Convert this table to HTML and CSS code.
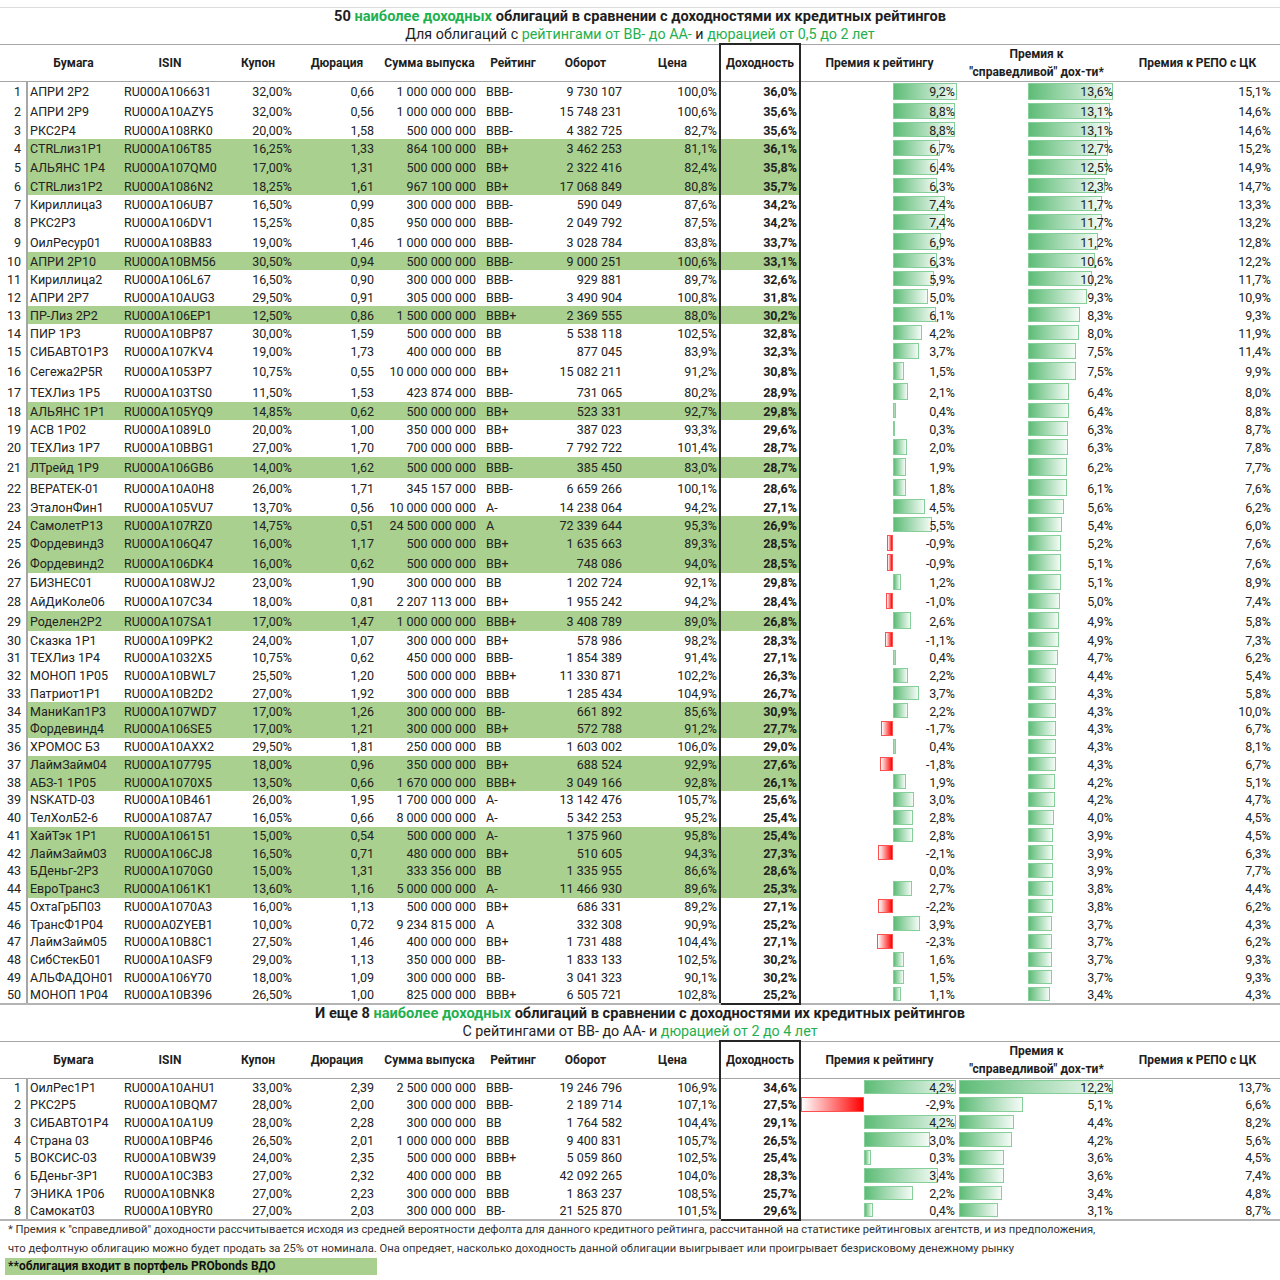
FILE: index.html
```html
<!DOCTYPE html>
<html lang="ru">
<head>
<meta charset="utf-8">
<title>50 наиболее доходных облигаций</title>
<link rel="stylesheet" href="styles.css">
</head>
<body>
<div class="sheet">
<header class="cap first">
<div class="h1">50 <span class="gr">наиболее доходных</span> облигаций в сравнении с доходностями их кредитных рейтингов</div>
<div class="h2">Для облигаций с <span class="gr">рейтингами от BB- до AA-</span> и <span class="gr">дюрацией от 0,5 до 2 лет</span></div>
</header>
<table class="grid t1">
<colgroup><col class="c1"><col class="c2"><col class="c3"><col class="c4"><col class="c5"><col class="c6"><col class="c7"><col class="c8"><col class="c9"><col class="c10"><col class="c11"><col class="c12"><col class="c13"></colgroup>
<thead><tr><th></th><th>Бумага</th><th>ISIN</th><th>Купон</th><th>Дюрация</th><th>Сумма выпуска</th><th>Рейтинг</th><th>Оборот</th><th>Цена</th><th>Доходность</th><th>Премия к рейтингу</th><th>Премия к<br>"справедливой" дох-ти*</th><th>Премия к РЕПО с ЦК</th></tr></thead>
<tbody>
<tr class="a"><td>1</td><td>АПРИ 2Р2</td><td>RU000A106631</td><td>32,00%</td><td>0,66</td><td>1 000 000 000</td><td>BBB-</td><td>9 730 107</td><td>100,0%</td><td>36,0%</td><td><i class="bar" style="width:64px"></i><span class="v">9,2%</span></td><td><i class="bar" style="width:85px"></i><span class="v">13,6%</span></td><td>15,1%</td></tr>
<tr class="c"><td>2</td><td>АПРИ 2Р9</td><td>RU000A10AZY5</td><td>32,00%</td><td>0,56</td><td>1 000 000 000</td><td>BBB-</td><td>15 748 231</td><td>100,6%</td><td>35,6%</td><td><i class="bar" style="width:62px"></i><span class="v">8,8%</span></td><td><i class="bar" style="width:82px"></i><span class="v">13,1%</span></td><td>14,6%</td></tr>
<tr><td>3</td><td>РКС2Р4</td><td>RU000A108RK0</td><td>20,00%</td><td>1,58</td><td>500 000 000</td><td>BBB-</td><td>4 382 725</td><td>82,7%</td><td>35,6%</td><td><i class="bar" style="width:62px"></i><span class="v">8,8%</span></td><td><i class="bar" style="width:82px"></i><span class="v">13,1%</span></td><td>14,6%</td></tr>
<tr class="c g"><td>4</td><td>CTRLлиз1Р1</td><td>RU000A106T85</td><td>16,25%</td><td>1,33</td><td>864 100 000</td><td>BB+</td><td>3 462 253</td><td>81,1%</td><td>36,1%</td><td><i class="bar" style="width:47px"></i><span class="v">6,7%</span></td><td><i class="bar" style="width:80px"></i><span class="v">12,7%</span></td><td>15,2%</td></tr>
<tr class="c g"><td>5</td><td>АЛЬЯНС 1Р4</td><td>RU000A107QM0</td><td>17,00%</td><td>1,31</td><td>500 000 000</td><td>BB+</td><td>2 322 416</td><td>82,4%</td><td>35,8%</td><td><i class="bar" style="width:45px"></i><span class="v">6,4%</span></td><td><i class="bar" style="width:79px"></i><span class="v">12,5%</span></td><td>14,9%</td></tr>
<tr class="g"><td>6</td><td>CTRLлиз1Р2</td><td>RU000A1086N2</td><td>18,25%</td><td>1,61</td><td>967 100 000</td><td>BB+</td><td>17 068 849</td><td>80,8%</td><td>35,7%</td><td><i class="bar" style="width:44px"></i><span class="v">6,3%</span></td><td><i class="bar" style="width:77px"></i><span class="v">12,3%</span></td><td>14,7%</td></tr>
<tr><td>7</td><td>Кириллица3</td><td>RU000A106UB7</td><td>16,50%</td><td>0,99</td><td>300 000 000</td><td>BBB-</td><td>590 049</td><td>87,6%</td><td>34,2%</td><td><i class="bar" style="width:52px"></i><span class="v">7,4%</span></td><td><i class="bar" style="width:74px"></i><span class="v">11,7%</span></td><td>13,3%</td></tr>
<tr class="c"><td>8</td><td>РКС2Р3</td><td>RU000A106DV1</td><td>15,25%</td><td>0,85</td><td>950 000 000</td><td>BBB-</td><td>2 049 792</td><td>87,5%</td><td>34,2%</td><td><i class="bar" style="width:52px"></i><span class="v">7,4%</span></td><td><i class="bar" style="width:74px"></i><span class="v">11,7%</span></td><td>13,2%</td></tr>
<tr class="b"><td>9</td><td>ОилРесур01</td><td>RU000A108B83</td><td>19,00%</td><td>1,46</td><td>1 000 000 000</td><td>BBB-</td><td>3 028 784</td><td>83,8%</td><td>33,7%</td><td><i class="bar" style="width:48px"></i><span class="v">6,9%</span></td><td><i class="bar" style="width:70px"></i><span class="v">11,2%</span></td><td>12,8%</td></tr>
<tr class="g"><td>10</td><td>АПРИ 2Р10</td><td>RU000A10BM56</td><td>30,50%</td><td>0,94</td><td>500 000 000</td><td>BBB-</td><td>9 000 251</td><td>100,6%</td><td>33,1%</td><td><i class="bar" style="width:44px"></i><span class="v">6,3%</span></td><td><i class="bar" style="width:67px"></i><span class="v">10,6%</span></td><td>12,2%</td></tr>
<tr><td>11</td><td>Кириллица2</td><td>RU000A106L67</td><td>16,50%</td><td>0,90</td><td>300 000 000</td><td>BBB-</td><td>929 881</td><td>89,7%</td><td>32,6%</td><td><i class="bar" style="width:41px"></i><span class="v">5,9%</span></td><td><i class="bar" style="width:64px"></i><span class="v">10,2%</span></td><td>11,7%</td></tr>
<tr><td>12</td><td>АПРИ 2Р7</td><td>RU000A10AUG3</td><td>29,50%</td><td>0,91</td><td>305 000 000</td><td>BBB-</td><td>3 490 904</td><td>100,8%</td><td>31,8%</td><td><i class="bar" style="width:35px"></i><span class="v">5,0%</span></td><td><i class="bar" style="width:59px"></i><span class="v">9,3%</span></td><td>10,9%</td></tr>
<tr class="g"><td>13</td><td>ПР-Лиз 2Р2</td><td>RU000A106EP1</td><td>12,50%</td><td>0,86</td><td>1 500 000 000</td><td>BBB+</td><td>2 369 555</td><td>88,0%</td><td>30,2%</td><td><i class="bar" style="width:43px"></i><span class="v">6,1%</span></td><td><i class="bar" style="width:52px"></i><span class="v">8,3%</span></td><td>9,3%</td></tr>
<tr><td>14</td><td>ПИР 1Р3</td><td>RU000A10BP87</td><td>30,00%</td><td>1,59</td><td>500 000 000</td><td>BB</td><td>5 538 118</td><td>102,5%</td><td>32,8%</td><td><i class="bar" style="width:29px"></i><span class="v">4,2%</span></td><td><i class="bar" style="width:51px"></i><span class="v">8,0%</span></td><td>11,9%</td></tr>
<tr class="c"><td>15</td><td>СИБАВТО1Р3</td><td>RU000A107KV4</td><td>19,00%</td><td>1,73</td><td>400 000 000</td><td>BB</td><td>877 045</td><td>83,9%</td><td>32,3%</td><td><i class="bar" style="width:26px"></i><span class="v">3,7%</span></td><td><i class="bar" style="width:48px"></i><span class="v">7,5%</span></td><td>11,4%</td></tr>
<tr class="a"><td>16</td><td>Сегежа2Р5R</td><td>RU000A1053P7</td><td>10,75%</td><td>0,55</td><td>10 000 000 000</td><td>BB+</td><td>15 082 211</td><td>91,2%</td><td>30,8%</td><td><i class="bar" style="width:11px"></i><span class="v">1,5%</span></td><td><i class="bar" style="width:48px"></i><span class="v">7,5%</span></td><td>9,9%</td></tr>
<tr class="b"><td>17</td><td>ТЕХЛиз 1Р5</td><td>RU000A103TS0</td><td>11,50%</td><td>1,53</td><td>423 874 000</td><td>BBB-</td><td>731 065</td><td>80,2%</td><td>28,9%</td><td><i class="bar" style="width:15px"></i><span class="v">2,1%</span></td><td><i class="bar" style="width:41px"></i><span class="v">6,4%</span></td><td>8,0%</td></tr>
<tr class="g"><td>18</td><td>АЛЬЯНС 1Р1</td><td>RU000A105YQ9</td><td>14,85%</td><td>0,62</td><td>500 000 000</td><td>BB+</td><td>523 331</td><td>92,7%</td><td>29,8%</td><td><i class="bar" style="width:3px"></i><span class="v">0,4%</span></td><td><i class="bar" style="width:41px"></i><span class="v">6,4%</span></td><td>8,8%</td></tr>
<tr><td>19</td><td>АСВ 1Р02</td><td>RU000A1089L0</td><td>20,00%</td><td>1,00</td><td>350 000 000</td><td>BB+</td><td>387 023</td><td>93,3%</td><td>29,6%</td><td><i class="bar" style="width:2px"></i><span class="v">0,3%</span></td><td><i class="bar" style="width:40px"></i><span class="v">6,3%</span></td><td>8,7%</td></tr>
<tr class="c"><td>20</td><td>ТЕХЛиз 1Р7</td><td>RU000A10BBG1</td><td>27,00%</td><td>1,70</td><td>700 000 000</td><td>BBB-</td><td>7 792 722</td><td>101,4%</td><td>28,7%</td><td><i class="bar" style="width:14px"></i><span class="v">2,0%</span></td><td><i class="bar" style="width:40px"></i><span class="v">6,3%</span></td><td>7,8%</td></tr>
<tr class="a g"><td>21</td><td>ЛТрейд 1Р9</td><td>RU000A106GB6</td><td>14,00%</td><td>1,62</td><td>500 000 000</td><td>BBB-</td><td>385 450</td><td>83,0%</td><td>28,7%</td><td><i class="bar" style="width:13px"></i><span class="v">1,9%</span></td><td><i class="bar" style="width:39px"></i><span class="v">6,2%</span></td><td>7,7%</td></tr>
<tr class="b"><td>22</td><td>ВЕРАТЕК-01</td><td>RU000A10A0H8</td><td>26,00%</td><td>1,71</td><td>345 157 000</td><td>BBB-</td><td>6 659 266</td><td>100,1%</td><td>28,6%</td><td><i class="bar" style="width:13px"></i><span class="v">1,8%</span></td><td><i class="bar" style="width:39px"></i><span class="v">6,1%</span></td><td>7,6%</td></tr>
<tr><td>23</td><td>ЭталонФин1</td><td>RU000A105VU7</td><td>13,70%</td><td>0,56</td><td>10 000 000 000</td><td>A-</td><td>14 238 064</td><td>94,2%</td><td>27,1%</td><td><i class="bar" style="width:32px"></i><span class="v">4,5%</span></td><td><i class="bar" style="width:36px"></i><span class="v">5,6%</span></td><td>6,2%</td></tr>
<tr class="g"><td>24</td><td>СамолетР13</td><td>RU000A107RZ0</td><td>14,75%</td><td>0,51</td><td>24 500 000 000</td><td>A</td><td>72 339 644</td><td>95,3%</td><td>26,9%</td><td><i class="bar" style="width:39px"></i><span class="v">5,5%</span></td><td><i class="bar" style="width:34px"></i><span class="v">5,4%</span></td><td>6,0%</td></tr>
<tr class="c g"><td>25</td><td>Фордевинд3</td><td>RU000A106Q47</td><td>16,00%</td><td>1,17</td><td>500 000 000</td><td>BB+</td><td>1 635 663</td><td>89,3%</td><td>28,5%</td><td><i class="bar neg" style="width:6px"></i><span class="v">-0,9%</span></td><td><i class="bar" style="width:33px"></i><span class="v">5,2%</span></td><td>7,6%</td></tr>
<tr class="b g"><td>26</td><td>Фордевинд2</td><td>RU000A106DK4</td><td>16,00%</td><td>0,62</td><td>500 000 000</td><td>BB+</td><td>748 086</td><td>94,0%</td><td>28,5%</td><td><i class="bar neg" style="width:6px"></i><span class="v">-0,9%</span></td><td><i class="bar" style="width:33px"></i><span class="v">5,1%</span></td><td>7,6%</td></tr>
<tr class="c"><td>27</td><td>БИЗНЕС01</td><td>RU000A108WJ2</td><td>23,00%</td><td>1,90</td><td>300 000 000</td><td>BB</td><td>1 202 724</td><td>92,1%</td><td>29,8%</td><td><i class="bar" style="width:8px"></i><span class="v">1,2%</span></td><td><i class="bar" style="width:33px"></i><span class="v">5,1%</span></td><td>8,9%</td></tr>
<tr class="c"><td>28</td><td>АйДиКоле06</td><td>RU000A107C34</td><td>18,00%</td><td>0,81</td><td>2 207 113 000</td><td>BB+</td><td>1 955 242</td><td>94,2%</td><td>28,4%</td><td><i class="bar neg" style="width:7px"></i><span class="v">-1,0%</span></td><td><i class="bar" style="width:32px"></i><span class="v">5,0%</span></td><td>7,4%</td></tr>
<tr class="b g"><td>29</td><td>Роделен2Р2</td><td>RU000A107SA1</td><td>17,00%</td><td>1,47</td><td>1 000 000 000</td><td>BBB+</td><td>3 408 789</td><td>89,0%</td><td>26,8%</td><td><i class="bar" style="width:18px"></i><span class="v">2,6%</span></td><td><i class="bar" style="width:31px"></i><span class="v">4,9%</span></td><td>5,8%</td></tr>
<tr><td>30</td><td>Сказка 1Р1</td><td>RU000A109PK2</td><td>24,00%</td><td>1,07</td><td>300 000 000</td><td>BB+</td><td>578 986</td><td>98,2%</td><td>28,3%</td><td><i class="bar neg" style="width:8px"></i><span class="v">-1,1%</span></td><td><i class="bar" style="width:31px"></i><span class="v">4,9%</span></td><td>7,3%</td></tr>
</tbody>
<tbody class="s">
<tr><td>31</td><td>ТЕХЛиз 1Р4</td><td>RU000A1032X5</td><td>10,75%</td><td>0,62</td><td>450 000 000</td><td>BBB-</td><td>1 854 389</td><td>91,4%</td><td>27,1%</td><td><i class="bar" style="width:3px"></i><span class="v">0,4%</span></td><td><i class="bar" style="width:30px"></i><span class="v">4,7%</span></td><td>6,2%</td></tr>
<tr><td>32</td><td>МОНОП 1Р05</td><td>RU000A10BWL7</td><td>25,50%</td><td>1,20</td><td>500 000 000</td><td>BBB+</td><td>11 330 871</td><td>102,2%</td><td>26,3%</td><td><i class="bar" style="width:15px"></i><span class="v">2,2%</span></td><td><i class="bar" style="width:28px"></i><span class="v">4,4%</span></td><td>5,4%</td></tr>
<tr><td>33</td><td>Патриот1Р1</td><td>RU000A10B2D2</td><td>27,00%</td><td>1,92</td><td>300 000 000</td><td>BBB</td><td>1 285 434</td><td>104,9%</td><td>26,7%</td><td><i class="bar" style="width:26px"></i><span class="v">3,7%</span></td><td><i class="bar" style="width:28px"></i><span class="v">4,3%</span></td><td>5,8%</td></tr>
<tr class="g"><td>34</td><td>МаниКап1Р3</td><td>RU000A107WD7</td><td>17,00%</td><td>1,26</td><td>300 000 000</td><td>BB-</td><td>661 892</td><td>85,6%</td><td>30,9%</td><td><i class="bar" style="width:15px"></i><span class="v">2,2%</span></td><td><i class="bar" style="width:28px"></i><span class="v">4,3%</span></td><td>10,0%</td></tr>
<tr class="g"><td>35</td><td>Фордевинд4</td><td>RU000A106SE5</td><td>17,00%</td><td>1,21</td><td>300 000 000</td><td>BB+</td><td>572 788</td><td>91,2%</td><td>27,7%</td><td><i class="bar neg" style="width:12px"></i><span class="v">-1,7%</span></td><td><i class="bar" style="width:28px"></i><span class="v">4,3%</span></td><td>6,7%</td></tr>
<tr><td>36</td><td>ХРОМОС Б3</td><td>RU000A10AXX2</td><td>29,50%</td><td>1,81</td><td>250 000 000</td><td>BB</td><td>1 603 002</td><td>106,0%</td><td>29,0%</td><td><i class="bar" style="width:3px"></i><span class="v">0,4%</span></td><td><i class="bar" style="width:28px"></i><span class="v">4,3%</span></td><td>8,1%</td></tr>
<tr class="g"><td>37</td><td>ЛаймЗайм04</td><td>RU000A107795</td><td>18,00%</td><td>0,96</td><td>350 000 000</td><td>BB+</td><td>688 524</td><td>92,9%</td><td>27,6%</td><td><i class="bar neg" style="width:13px"></i><span class="v">-1,8%</span></td><td><i class="bar" style="width:28px"></i><span class="v">4,3%</span></td><td>6,7%</td></tr>
<tr class="g"><td>38</td><td>АБЗ-1 1Р05</td><td>RU000A1070X5</td><td>13,50%</td><td>0,66</td><td>1 670 000 000</td><td>BBB+</td><td>3 049 166</td><td>92,8%</td><td>26,1%</td><td><i class="bar" style="width:13px"></i><span class="v">1,9%</span></td><td><i class="bar" style="width:27px"></i><span class="v">4,2%</span></td><td>5,1%</td></tr>
<tr><td>39</td><td>NSKATD-03</td><td>RU000A10B461</td><td>26,00%</td><td>1,95</td><td>1 700 000 000</td><td>A-</td><td>13 142 476</td><td>105,7%</td><td>25,6%</td><td><i class="bar" style="width:21px"></i><span class="v">3,0%</span></td><td><i class="bar" style="width:27px"></i><span class="v">4,2%</span></td><td>4,7%</td></tr>
<tr><td>40</td><td>ТелХолБ2-6</td><td>RU000A1087A7</td><td>16,05%</td><td>0,66</td><td>8 000 000 000</td><td>A-</td><td>5 342 253</td><td>95,2%</td><td>25,4%</td><td><i class="bar" style="width:20px"></i><span class="v">2,8%</span></td><td><i class="bar" style="width:26px"></i><span class="v">4,0%</span></td><td>4,5%</td></tr>
<tr class="g"><td>41</td><td>ХайТэк 1Р1</td><td>RU000A106151</td><td>15,00%</td><td>0,54</td><td>500 000 000</td><td>A-</td><td>1 375 960</td><td>95,8%</td><td>25,4%</td><td><i class="bar" style="width:20px"></i><span class="v">2,8%</span></td><td><i class="bar" style="width:25px"></i><span class="v">3,9%</span></td><td>4,5%</td></tr>
<tr class="g"><td>42</td><td>ЛаймЗайм03</td><td>RU000A106CJ8</td><td>16,50%</td><td>0,71</td><td>480 000 000</td><td>BB+</td><td>510 605</td><td>94,3%</td><td>27,3%</td><td><i class="bar neg" style="width:15px"></i><span class="v">-2,1%</span></td><td><i class="bar" style="width:25px"></i><span class="v">3,9%</span></td><td>6,3%</td></tr>
<tr class="g"><td>43</td><td>БДеньг-2Р3</td><td>RU000A1070G0</td><td>15,00%</td><td>1,31</td><td>333 356 000</td><td>BB</td><td>1 335 955</td><td>86,6%</td><td>28,6%</td><td><span class="v">0,0%</span></td><td><i class="bar" style="width:25px"></i><span class="v">3,9%</span></td><td>7,7%</td></tr>
<tr class="g"><td>44</td><td>ЕвроТранс3</td><td>RU000A1061K1</td><td>13,60%</td><td>1,16</td><td>5 000 000 000</td><td>A-</td><td>11 466 930</td><td>89,6%</td><td>25,3%</td><td><i class="bar" style="width:19px"></i><span class="v">2,7%</span></td><td><i class="bar" style="width:25px"></i><span class="v">3,8%</span></td><td>4,4%</td></tr>
<tr><td>45</td><td>ОхтаГрБП03</td><td>RU000A1070A3</td><td>16,00%</td><td>1,13</td><td>500 000 000</td><td>BB+</td><td>686 331</td><td>89,2%</td><td>27,1%</td><td><i class="bar neg" style="width:15px"></i><span class="v">-2,2%</span></td><td><i class="bar" style="width:25px"></i><span class="v">3,8%</span></td><td>6,2%</td></tr>
<tr><td>46</td><td>ТрансФ1Р04</td><td>RU000A0ZYEB1</td><td>10,00%</td><td>0,72</td><td>9 234 815 000</td><td>A</td><td>332 308</td><td>90,9%</td><td>25,2%</td><td><i class="bar" style="width:27px"></i><span class="v">3,9%</span></td><td><i class="bar" style="width:24px"></i><span class="v">3,7%</span></td><td>4,3%</td></tr>
<tr><td>47</td><td>ЛаймЗайм05</td><td>RU000A10B8C1</td><td>27,50%</td><td>1,46</td><td>400 000 000</td><td>BB+</td><td>1 731 488</td><td>104,4%</td><td>27,1%</td><td><i class="bar neg" style="width:16px"></i><span class="v">-2,3%</span></td><td><i class="bar" style="width:24px"></i><span class="v">3,7%</span></td><td>6,2%</td></tr>
<tr><td>48</td><td>СибСтекБ01</td><td>RU000A10ASF9</td><td>29,00%</td><td>1,13</td><td>350 000 000</td><td>BB-</td><td>1 833 133</td><td>102,5%</td><td>30,2%</td><td><i class="bar" style="width:11px"></i><span class="v">1,6%</span></td><td><i class="bar" style="width:24px"></i><span class="v">3,7%</span></td><td>9,3%</td></tr>
<tr><td>49</td><td>АЛЬФАДОН01</td><td>RU000A106Y70</td><td>18,00%</td><td>1,09</td><td>300 000 000</td><td>BB-</td><td>3 041 323</td><td>90,1%</td><td>30,2%</td><td><i class="bar" style="width:11px"></i><span class="v">1,5%</span></td><td><i class="bar" style="width:24px"></i><span class="v">3,7%</span></td><td>9,3%</td></tr>
<tr class="last"><td>50</td><td>МОНОП 1Р04</td><td>RU000A10B396</td><td>26,50%</td><td>1,00</td><td>825 000 000</td><td>BBB+</td><td>6 505 721</td><td>102,8%</td><td>25,2%</td><td><i class="bar" style="width:8px"></i><span class="v">1,1%</span></td><td><i class="bar" style="width:22px"></i><span class="v">3,4%</span></td><td>4,3%</td></tr>
</tbody>
</table>
<header class="cap">
<div class="h1">И еще 8 <span class="gr">наиболее доходных</span> облигаций в сравнении с доходностями их кредитных рейтингов</div>
<div class="h2">С рейтингами от BB- до AA- и <span class="gr">дюрацией от 2 до 4 лет</span></div>
</header>
<table class="grid t2">
<colgroup><col class="c1"><col class="c2"><col class="c3"><col class="c4"><col class="c5"><col class="c6"><col class="c7"><col class="c8"><col class="c9"><col class="c10"><col class="c11"><col class="c12"><col class="c13"></colgroup>
<thead><tr><th></th><th>Бумага</th><th>ISIN</th><th>Купон</th><th>Дюрация</th><th>Сумма выпуска</th><th>Рейтинг</th><th>Оборот</th><th>Цена</th><th>Доходность</th><th>Премия к рейтингу</th><th>Премия к<br>"справедливой" дох-ти*</th><th>Премия к РЕПО с ЦК</th></tr></thead>
<tbody class="s">
<tr><td>1</td><td>ОилРес1Р1</td><td>RU000A10AHU1</td><td>33,00%</td><td>2,39</td><td>2 500 000 000</td><td>BBB-</td><td>19 246 796</td><td>106,9%</td><td>34,6%</td><td><i class="bar" style="width:92px"></i><span class="v">4,2%</span></td><td><i class="bar" style="width:154px"></i><span class="v">12,2%</span></td><td>13,7%</td></tr>
<tr><td>2</td><td>РКС2Р5</td><td>RU000A10BQM7</td><td>28,00%</td><td>2,00</td><td>300 000 000</td><td>BBB-</td><td>2 189 714</td><td>107,1%</td><td>27,5%</td><td><i class="bar neg" style="width:63px"></i><span class="v">-2,9%</span></td><td><i class="bar" style="width:64px"></i><span class="v">5,1%</span></td><td>6,6%</td></tr>
<tr><td>3</td><td>СИБАВТО1Р4</td><td>RU000A10A1U9</td><td>28,00%</td><td>2,28</td><td>300 000 000</td><td>BB</td><td>1 764 582</td><td>104,4%</td><td>29,1%</td><td><i class="bar" style="width:92px"></i><span class="v">4,2%</span></td><td><i class="bar" style="width:55px"></i><span class="v">4,4%</span></td><td>8,2%</td></tr>
<tr><td>4</td><td>Страна 03</td><td>RU000A10BP46</td><td>26,50%</td><td>2,01</td><td>1 000 000 000</td><td>BBB</td><td>9 400 831</td><td>105,7%</td><td>26,5%</td><td><i class="bar" style="width:66px"></i><span class="v">3,0%</span></td><td><i class="bar" style="width:53px"></i><span class="v">4,2%</span></td><td>5,6%</td></tr>
<tr><td>5</td><td>ВОКСИС-03</td><td>RU000A10BW39</td><td>24,00%</td><td>2,35</td><td>500 000 000</td><td>BBB+</td><td>5 059 860</td><td>102,5%</td><td>25,4%</td><td><i class="bar" style="width:7px"></i><span class="v">0,3%</span></td><td><i class="bar" style="width:45px"></i><span class="v">3,6%</span></td><td>4,5%</td></tr>
<tr><td>6</td><td>БДеньг-3Р1</td><td>RU000A10C3B3</td><td>27,00%</td><td>2,32</td><td>400 000 000</td><td>BB</td><td>42 092 265</td><td>104,0%</td><td>28,3%</td><td><i class="bar" style="width:74px"></i><span class="v">3,4%</span></td><td><i class="bar" style="width:45px"></i><span class="v">3,6%</span></td><td>7,4%</td></tr>
<tr><td>7</td><td>ЭНИКА 1Р06</td><td>RU000A10BNK8</td><td>27,00%</td><td>2,23</td><td>300 000 000</td><td>BBB</td><td>1 863 237</td><td>108,5%</td><td>25,7%</td><td><i class="bar" style="width:49px"></i><span class="v">2,2%</span></td><td><i class="bar" style="width:43px"></i><span class="v">3,4%</span></td><td>4,8%</td></tr>
<tr class="last"><td>8</td><td>Самокат03</td><td>RU000A10BYR0</td><td>27,00%</td><td>2,03</td><td>300 000 000</td><td>BB-</td><td>21 525 870</td><td>101,5%</td><td>29,6%</td><td><i class="bar" style="width:9px"></i><span class="v">0,4%</span></td><td><i class="bar" style="width:39px"></i><span class="v">3,1%</span></td><td>8,7%</td></tr>
</tbody>
</table>
<footer class="notes">
<p>* Премия к "справедливой" доходности рассчитывается исходя из средней вероятности дефолта для данного кредитного рейтинга, рассчитанной на статистике рейтинговых агентств, и из предположения,</p>
<p>что дефолтную облигацию можно будет продать за 25% от номинала. Она опредяет, насколько доходность данной облигации выигрывает или проигрывает безрисковому денежному рынку</p>
<div class="mark">**облигация входит в портфель PRObonds ВДО</div>
</footer>
</div>
</body>
</html>
```
FILE: styles.css
```css
* { box-sizing: border-box; }
body { margin: 0; background: #fff; color: #222; font-family: Roboto, "Liberation Sans", sans-serif; }
.sheet { width: 1280px; padding-top: 7px; }

.cap { text-align: center; color: #1e1e1e; }
.cap.first { border-top: 1px solid #dcdcdc; }
.cap .h1 { font-weight: bold; font-size: 14.6px; line-height: 17px; }
.cap .h2 { font-size: 14.3px; line-height: 18px; }
.gr { color: #1fb04f; }

.grid { width: 1280px; border-collapse: collapse; table-layout: fixed; font-size: 12.5px; }
.c1 { width: 27px; } .c2 { width: 93px; } .c3 { width: 100px; } .c4 { width: 76px; }
.c5 { width: 82px; } .c6 { width: 103px; } .c7 { width: 64px; } .c8 { width: 81px; }
.c9 { width: 94px; } .c10 { width: 80px; } .c11 { width: 158px; } .c12 { width: 157px; } .c13 { width: 165px; }

.grid th { height: 36px; padding: 0; font-size: 12px; line-height: 18px; font-weight: bold; color: #1e1e1e; text-align: center; border-top: 1px solid #a6a6a6; border-bottom: 1px solid #a6a6a6; white-space: nowrap; }
.grid th:nth-child(10) { border: 2px solid #262626; border-bottom: 1px solid #a6a6a6; }

.grid td { padding: 0 4px; line-height: 15px; white-space: nowrap; overflow: visible; }
.grid tbody tr { height: 18px; }
.grid tbody tr.a { height: 21px; }
.grid tbody tr.b { height: 20px; }
.grid tbody tr.c { height: 19px; }
.grid tbody.s tr { height: 17.75px; }

.grid td:nth-child(1) { text-align: right; padding-right: 5px; border-right: 2px solid #a6a6a6; }
.grid td:nth-child(2) { padding-left: 2px; }
.grid td:nth-child(7) { padding-left: 5px; }
.grid td:nth-child(4), .grid td:nth-child(5), .grid td:nth-child(6), .grid td:nth-child(8),
.grid td:nth-child(9), .grid td:nth-child(10), .grid td:nth-child(11), .grid td:nth-child(12),
.grid td:nth-child(13) { text-align: right; }
.grid td:nth-child(6) { padding-right: 5px; }
.grid td:nth-child(9) { padding-right: 2px; }
.grid td:nth-child(10) { font-weight: bold; padding-right: 2px; border-left: 2px solid #262626; border-right: 2px solid #262626; }
.grid td:nth-child(11) { position: relative; padding-right: 3px; }
.grid td:nth-child(12) { position: relative; padding-right: 2px; }
.grid td:nth-child(13) { padding-right: 9px; }

.grid tr.g td:nth-child(n+2):nth-child(-n+10) { background: #a9d08e; }

.grid tr.last td { border-bottom: 2px solid #b4b4b4; }
.grid tr.last td:nth-child(10) { border-bottom: 2px solid #262626; }

.bar { position: absolute; top: 1px; bottom: 2px; border: 1px solid #86cf9a; background: linear-gradient(to right, #5dbc76, #f4fbf6); }
.bar.neg { border-color: #ff5050; background: linear-gradient(to left, #ff0000, #ffffff); }
.v { position: relative; }

.t1 td:nth-child(11) .bar { left: 92px; }
.t1 td:nth-child(11) .bar.neg { left: auto; right: 65px; }
.t1 td:nth-child(12) .bar { left: 70px; }
.t2 td:nth-child(11) .bar { left: 63px; }
.t2 td:nth-child(11) .bar.neg { left: auto; right: 94px; }
.t2 td:nth-child(12) .bar { left: 1px; }

.notes { font-size: 11.2px; color: #333; }
.notes p { margin: 0; padding-left: 8px; line-height: 18.5px; }
.mark { margin-left: 5px; width: 372px; background: #a9d08e; color: #111; font-weight: bold; font-size: 12px; line-height: 17px; padding-left: 3px; }
```
